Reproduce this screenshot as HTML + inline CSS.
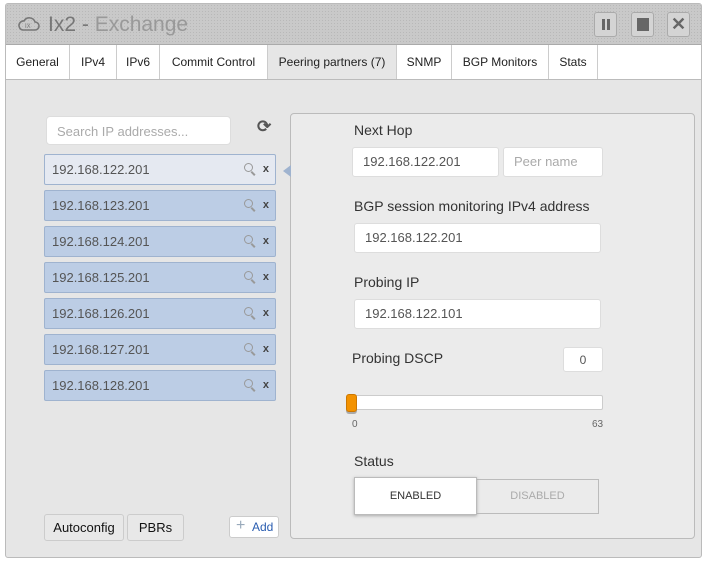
<!DOCTYPE html>
<html><head><style>
*{box-sizing:border-box;margin:0;padding:0}
body{width:707px;height:565px;background:#fff;font-family:"Liberation Sans",sans-serif;position:relative;overflow:hidden}
.win{position:absolute;left:5px;top:3px;width:697px;height:555px;border:1px solid #bbb;background:#e6e6e6;border-radius:3px;overflow:hidden}
.title{position:absolute;left:0;top:0;width:100%;height:41px;background:#c9c9c9;background-image:radial-gradient(#b8b8b8 0.6px,transparent 0.7px);background-size:3px 3px;border-bottom:1px solid #aaa}
.title .t{position:absolute;left:42px;top:9px;font-size:21px;color:#777}
.title .t span{color:#999}
.btn{position:absolute;top:8px;width:23px;height:25px;border:1px solid #aaa;border-radius:3px;background:#d4d4d4}
.tabs{position:absolute;left:0;top:41px;width:100%;height:35px;background:#fff;border-bottom:1px solid #bbb}
.tab{position:absolute;top:0;height:34px;border-right:1px solid #ccc;font-size:12px;color:#222;text-align:center;line-height:34px}
.tab.a{background:#e6e6e6}
.abs{position:absolute}
.search{left:40px;top:112px;width:185px;height:29px;background:#fff;border:1px solid #ddd;border-radius:4px;font-size:13px;color:#aaa;padding:7px 10px}
.ip{position:absolute;left:38px;width:232px;height:31px;background:#bccde5;border:1px solid #9fb3cf;border-radius:2px;font-size:13px;color:#555;padding:7px 7px}
.ip.sel{background:#e5e9f1}
.ip .x{position:absolute;right:6px;top:8px;font-size:11px;font-weight:bold;color:#444}
.ip .q{position:absolute;right:22px;top:8px;width:9px;height:9px;border:1.5px solid #999;border-radius:50%}
.ip .q:after{content:"";position:absolute;left:7px;top:7px;width:5px;height:1.5px;background:#999;transform:rotate(45deg);transform-origin:0 0}
.panel{left:284px;top:109px;width:405px;height:426px;background:#ebebeb;border:1px solid #bbb;border-radius:4px}
.lbl{position:absolute;font-size:14px;color:#333}
.inp{position:absolute;background:#fff;border:1px solid #ddd;border-radius:3px;font-size:13px;color:#555;padding:6px 10px}
.b2{position:absolute;top:510px;height:27px;border:1px solid #ccc;border-radius:3px;background:#e8e8e8;font-size:13px;color:#111;text-align:center;line-height:25px}
</style></head><body>
<div class="win">
 <div class="title">
  <svg class="abs" style="left:12px;top:12px" width="22" height="16" viewBox="0 0 22 16"><path d="M5 14h12a4 4 0 0 0 0-8 6 6 0 0 0-11-1 4.5 4.5 0 0 0-1 9z" fill="none" stroke="#777" stroke-width="1.6"/><text x="7" y="12" font-size="6" fill="#777" font-family="Liberation Sans">IX</text></svg>
  <div class="t">Ix2 - <span>Exchange</span></div>
  <div class="btn" style="left:588px"><div class="abs" style="left:7px;top:6px;width:3px;height:11px;background:#666"></div><div class="abs" style="left:12px;top:6px;width:3px;height:11px;background:#666"></div></div>
  <div class="btn" style="left:625px"><div class="abs" style="left:5px;top:5px;width:12px;height:13px;background:#666"></div></div>
  <div class="btn" style="left:661px;text-align:center;font-size:18px;font-weight:bold;color:#666;line-height:23px">✕</div>
 </div>
 <div class="tabs">
  <div class="tab" style="left:0;width:64px">General</div>
  <div class="tab" style="left:64px;width:47px">IPv4</div>
  <div class="tab" style="left:111px;width:43px">IPv6</div>
  <div class="tab" style="left:154px;width:108px">Commit Control</div>
  <div class="tab a" style="left:262px;width:129px">Peering partners (7)</div>
  <div class="tab" style="left:391px;width:55px">SNMP</div>
  <div class="tab" style="left:446px;width:97px">BGP Monitors</div>
  <div class="tab" style="left:543px;width:49px">Stats</div>
 </div>
 <div class="abs search">Search IP addresses...</div>
 <div class="abs" style="left:251px;top:113px;font-size:17px;font-weight:bold;color:#555">⟳</div>
 <div class="ip sel" style="top:150px">192.168.122.201<span class="q"></span><span class="x">x</span></div>
 <div class="ip" style="top:186px">192.168.123.201<span class="q"></span><span class="x">x</span></div>
 <div class="ip" style="top:222px">192.168.124.201<span class="q"></span><span class="x">x</span></div>
 <div class="ip" style="top:258px">192.168.125.201<span class="q"></span><span class="x">x</span></div>
 <div class="ip" style="top:294px">192.168.126.201<span class="q"></span><span class="x">x</span></div>
 <div class="ip" style="top:330px">192.168.127.201<span class="q"></span><span class="x">x</span></div>
 <div class="ip" style="top:366px">192.168.128.201<span class="q"></span><span class="x">x</span></div>
 <div class="abs panel"></div>
 <div class="abs" style="left:277px;top:161px;width:0;height:0;border-top:6px solid transparent;border-bottom:6px solid transparent;border-right:8px solid #9fb3cf"></div>
 <div class="lbl" style="left:348px;top:118px">Next Hop</div>
 <div class="inp" style="left:346px;top:143px;width:147px;height:30px">192.168.122.201</div>
 <div class="inp" style="left:497px;top:143px;width:100px;height:30px;color:#aaa">Peer name</div>
 <div class="lbl" style="left:348px;top:194px">BGP session monitoring IPv4 address</div>
 <div class="inp" style="left:348px;top:219px;width:247px;height:30px">192.168.122.201</div>
 <div class="lbl" style="left:348px;top:270px">Probing IP</div>
 <div class="inp" style="left:348px;top:295px;width:247px;height:30px">192.168.122.101</div>
 <div class="lbl" style="left:346px;top:346px">Probing DSCP</div>
 <div class="inp" style="left:557px;top:343px;width:40px;height:25px;text-align:center;padding:5px 0;font-size:12px">0</div>
 <div class="abs" style="left:341px;top:391px;width:256px;height:15px;background:#fff;border:1px solid #ccc;border-radius:2px"></div>
 <div class="abs" style="left:340px;top:390px;width:11px;height:18px;background:#f39200;border:1px solid #c70;border-radius:3px;box-shadow:0 2px 0 #aaa"></div>
 <div class="abs" style="left:346px;top:415px;font-size:10px;color:#666">0</div>
 <div class="abs" style="left:586px;top:415px;font-size:10px;color:#666">63</div>
 <div class="lbl" style="left:348px;top:449px">Status</div>
 <div class="abs" style="left:470px;top:475px;width:123px;height:35px;border:1px solid #bbb;font-size:11px;color:#aaa;text-align:center;line-height:33px">DISABLED</div>
 <div class="abs" style="left:348px;top:473px;width:123px;height:38px;background:#fff;border:1px solid #bbb;box-shadow:0 1px 3px #aaa;font-size:11px;color:#333;text-align:center;line-height:36px">ENABLED</div>
 <div class="b2" style="left:38px;width:80px">Autoconfig</div>
 <div class="b2" style="left:121px;width:57px">PBRs</div>
 <div class="abs" style="left:223px;top:512px;width:50px;height:22px;background:#fff;border:1px solid #ccc;border-radius:3px;font-size:12px;color:#2a5db0;line-height:20px;padding-left:22px">Add<span class="abs" style="left:6px;top:-1px;font-size:16px;color:#9ab">+</span></div>
</div>
</body></html>
